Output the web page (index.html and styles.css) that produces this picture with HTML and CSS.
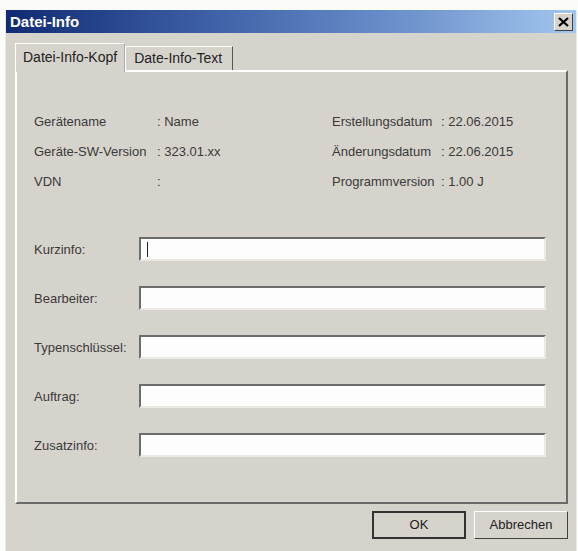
FILE: index.html
```html
<!DOCTYPE html>
<html lang="de">
<head>
    <meta charset="UTF-8">
    <title>Datei-Info</title>
    <link rel="stylesheet" href="styles.css">
</head>
<body>
    <div class="dialog">
        <div class="titlebar">
            <span class="title">Datei-Info</span>
            <span class="close">
                <svg width="11" height="10" viewBox="0 0 11 10"><path d="M1 1 L10 9 M10 1 L1 9" stroke="#000" stroke-width="2.2"/></svg>
            </span>
        </div>
        <div class="content">
            <div class="tabs">
                <div class="tab active">Datei-Info-Kopf</div>
                <div class="tab">Date-Info-Text</div>
            </div>
            <div class="panel">
                <div class="info">
                    <div class="col">
                        <div class="row"><span class="key">Gerätename</span><span>: Name</span></div>
                        <div class="row"><span class="key">Geräte-SW-Version</span><span>: 323.01.xx</span></div>
                        <div class="row"><span class="key">VDN</span><span>:</span></div>
                    </div>
                    <div class="col right">
                        <div class="row"><span class="key">Erstellungsdatum</span><span>: 22.06.2015</span></div>
                        <div class="row"><span class="key">Änderungsdatum</span><span>: 22.06.2015</span></div>
                        <div class="row"><span class="key">Programmversion</span><span>: 1.00 J</span></div>
                    </div>
                </div>
                <div class="form">
                    <div class="field"><label>Kurzinfo:</label><div class="input"><span class="caret"></span></div></div>
                    <div class="field"><label>Bearbeiter:</label><div class="input"></div></div>
                    <div class="field"><label>Typenschlüssel:</label><div class="input"></div></div>
                    <div class="field"><label>Auftrag:</label><div class="input"></div></div>
                    <div class="field"><label>Zusatzinfo:</label><div class="input"></div></div>
                </div>
            </div>
            <div class="buttons">
                <div class="btn default">OK</div>
                <div class="btn">Abbrechen</div>
            </div>
        </div>
    </div>
</body>
</html>
```

FILE: styles.css
```css
* {
    box-sizing: border-box;
}

body {
    margin: 0;
    padding: 10px 1px 0 5px;
    background: #fbfbfa;
    font-family: 'Liberation Sans', Arial, sans-serif;
    font-size: 13px;
    color: #3a3a3a;
}

.dialog {
    height: 541px;
    background: #d6d3cc;
    border-left: 1px solid #eceae6;
    border-right: 1px solid #eceae6;
}

.titlebar {
    height: 23px;
    display: flex;
    align-items: center;
    justify-content: space-between;
    padding: 0 3px 0 4px;
    background: linear-gradient(to right, #102a74, #3d5fa6 35%, #6d92cc 70%, #a3c6ee);
}

.title {
    color: #fff;
    font-weight: bold;
    font-size: 15px;
}

.close {
    width: 19px;
    height: 18px;
    display: flex;
    align-items: center;
    justify-content: center;
    background: #d6d3cc;
    border: 1px solid;
    border-color: #fff #404040 #404040 #fff;
}

.content {
    padding: 10px 8px 0 9px;
}

.tabs {
    display: flex;
    align-items: flex-end;
    height: 29px;
    margin-bottom: -2px;
    position: relative;
    z-index: 1;
}

.tab {
    height: 24px;
    padding: 0 10px 0 8px;
    line-height: 22px;
    color: #222;
    border: 1px solid;
    border-color: #fff #555 transparent #fff;
    border-bottom: none;
    margin-bottom: 2px;
    font-size: 14px;
}

.tab.active {
    height: 29px;
    line-height: 26px;
    padding: 0 7px 0 7px;
    background: #d6d3cc;
    margin-bottom: 0;
    border-right-color: #aaa;
}

.panel {
    height: 434px;
    border: 2px solid;
    border-color: #fff #6a6a6a #6a6a6a #fff;
    padding: 35px 0 0 17px;
}

.info {
    display: flex;
}

.col {
    width: 298px;
}

.col.right {
    width: 230px;
}

.row {
    display: flex;
    height: 30px;
    line-height: 30px;
}

.row .key {
    width: 123px;
}

.col.right .key {
    width: 109px;
}

.form {
    margin-top: 40px;
    display: flex;
    flex-direction: column;
    gap: 25px;
}

.field {
    display: flex;
    align-items: center;
}

.field label {
    width: 105px;
}

.input {
    width: 407px;
    height: 24px;
    background: #fdfdfd;
    border: 2px solid;
    border-color: #6c6c6c #ebe9e4 #ebe9e4 #6c6c6c;
    display: flex;
    align-items: center;
}

.caret {
    width: 1px;
    height: 15px;
    margin-left: 6px;
    background: #222;
}

.buttons {
    display: flex;
    justify-content: flex-end;
    gap: 8px;
    margin-top: 7px;
}

.btn {
    width: 94px;
    height: 28px;
    line-height: 26px;
    text-align: center;
    color: #222;
    font-size: 13px;
    border: 1px solid;
    border-color: #fff #404040 #404040 #fff;
}

.btn.default {
    border: 2px solid #333;
    line-height: 24px;
}
```
